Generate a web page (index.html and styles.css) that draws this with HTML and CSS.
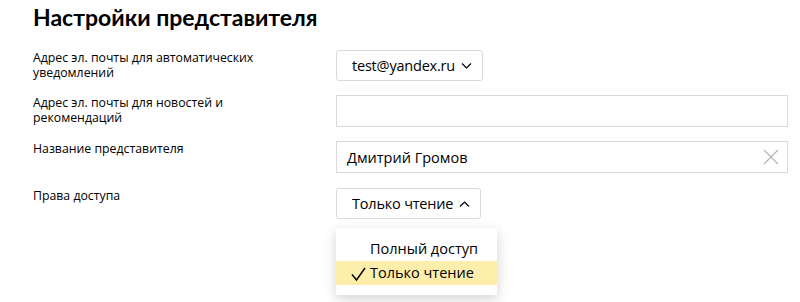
FILE: index.html
```html
<!DOCTYPE html>
<html lang="ru">
<head>
<meta charset="UTF-8">
<title>Настройки представителя</title>
<link rel="stylesheet" href="styles.css">
</head>
<body>
<div class="settings">
    <h1>Настройки представителя</h1>

    <div class="form-row row-first">
        <div class="form-label">Адрес эл. почты для автоматических уведомлений</div>
        <div class="form-control">
            <button class="select-btn">test@yandex.ru
                <svg class="chevron" width="11" height="6" viewBox="0 0 11 6"><path d="M1 0.5l4.5 4.5 4.5-4.5" fill="none" stroke="#000" stroke-width="1.2"/></svg>
            </button>
        </div>
    </div>

    <div class="form-row">
        <div class="form-label">Адрес эл. почты для новостей и рекомендаций</div>
        <div class="form-control">
            <div class="text-field"></div>
        </div>
    </div>

    <div class="form-row">
        <div class="form-label">Название представителя</div>
        <div class="form-control">
            <div class="text-field">
                <span>Дмитрий Громов</span>
                <svg class="clear" width="16" height="16" viewBox="0 0 16 16"><path d="M1 1l14 14M15 1L1 15" stroke="#b3b3b3" stroke-width="1.2"/></svg>
            </div>
        </div>
    </div>

    <div class="form-row row-last">
        <div class="form-label">Права доступа</div>
        <div class="form-control">
            <div class="select-wrap">
                <button class="select-btn">Только чтение
                    <svg class="chevron" width="11" height="6" viewBox="0 0 11 6"><path d="M1 5.5l4.5-4.5 4.5 4.5" fill="none" stroke="#000" stroke-width="1.2"/></svg>
                </button>
                <ul class="menu">
                    <li class="menu-item">Полный доступ</li>
                    <li class="menu-item checked">
                        <svg class="tick" width="15" height="14" viewBox="0 0 15 14"><path d="M1 7.5l4.5 5.5L14 1" fill="none" stroke="#000" stroke-width="1.5"/></svg>
                        Только чтение
                    </li>
                </ul>
            </div>
        </div>
    </div>
</div>
</body>
</html>
```

FILE: styles.css
```css
html, body {
    margin: 0;
    padding: 0;
    min-height: 302px;
    background: #fff;
    color: #000;
    font-family: "Open Sans", "Liberation Sans", sans-serif;
}

.settings {
    padding: 0 12px 0 33px;
}

.settings h1 {
    margin: 0;
    padding-top: 2px;
    font-family: Lato, "Open Sans", sans-serif;
    font-size: 23px;
    line-height: 30px;
    font-weight: 700;
}

.form-row {
    display: flex;
    align-items: flex-start;
    margin-top: 14px;
}

.form-row.row-first {
    margin-top: 18px;
}

.form-row.row-last {
    margin-top: 15px;
}

.form-label {
    width: 260px;
    flex: none;
    margin-right: 43px;
    font-size: 12.3px;
    line-height: 15px;
}

.form-control {
    flex: 1;
}

.select-btn {
    display: inline-flex;
    align-items: center;
    gap: 6px;
    height: 31px;
    padding: 0 10px 0 15px;
    border: 1px solid #d9d9d9;
    border-radius: 3px;
    background: #fff;
    font-family: inherit;
    font-size: 14.5px;
    letter-spacing: -0.2px;
    color: #000;
}

.text-field {
    display: flex;
    align-items: center;
    justify-content: space-between;
    height: 32px;
    box-sizing: border-box;
    padding: 0 8px 0 10px;
    border: 1px solid #d9d9d9;
    font-size: 14.5px;
}

.select-wrap {
    position: relative;
}

.menu {
    position: absolute;
    top: 40px;
    left: 0;
    width: 161px;
    margin: 0;
    padding: 9px 0 10px;
    list-style: none;
    background: #fff;
    box-shadow: 0 4px 12px rgba(0, 0, 0, 0.18);
    font-size: 14.5px;
}

.menu-item {
    height: 24px;
    line-height: 24px;
    padding-left: 34px;
    position: relative;
}

.menu-item.checked {
    background: #fdeeac;
}

.tick {
    position: absolute;
    left: 15px;
    top: 6px;
}
```
